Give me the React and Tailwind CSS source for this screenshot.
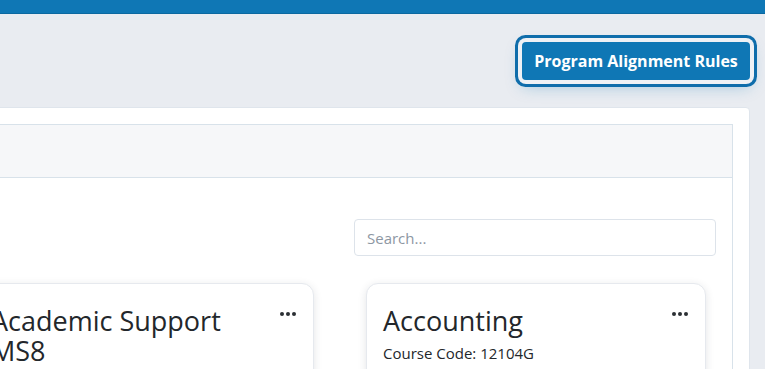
import { useState } from 'react';

const courses = [
  { id: 1, name: 'Academic Support MS8', code: 'AS108' },
  { id: 2, name: 'Accounting', code: '12104G' },
];

function CourseCard({ course }) {
  return (
    <div className="w-[340px] h-[120px] shrink-0 bg-white rounded-[12px] border border-[#e6e9ee] shadow-[0_2px_8px_rgba(30,41,59,0.12)] px-4 pt-[22px]">
      <div className="flex items-start justify-between">
        <h3 className="w-[250px] text-[27px] leading-[30px] text-[#23272b] font-normal">{course.name}</h3>
        <button className="mt-[6px] mr-[1px] flex gap-[2px] items-center">
          <span className="w-[4px] h-[4px] rounded-full bg-[#2b2f33]" />
          <span className="w-[4px] h-[4px] rounded-full bg-[#2b2f33]" />
          <span className="w-[4px] h-[4px] rounded-full bg-[#2b2f33]" />
        </button>
      </div>
      <p className="mt-[6px] text-[15px] text-[#23272b]">Course Code: {course.code}</p>
    </div>
  );
}

export default function App() {
  const [query, setQuery] = useState('');

  return (
    <div className="h-screen overflow-hidden bg-[#e9ecf1]" style={{ fontFamily: '"Open Sans", "Liberation Sans", sans-serif' }}>
      <div className="h-[14px] bg-[#0f77b5] border-b border-[#0b68a0]" />

      <div className="pr-[15px]">
        <div className="flex justify-end pt-[28px]">
          <button className="h-[38px] w-[228px] rounded-[4px] bg-[#0f77b5] text-white text-[16px] font-bold ring-[3px] ring-[#0f6dab] ring-offset-[4px] ring-offset-[#eef1f5] shadow-[0_6px_16px_rgba(15,119,181,0.35)]">
            Program Alignment Rules
          </button>
        </div>

        <div className="mt-[27px] ml-[-400px] bg-white rounded-[4px] border border-[#dfe5ec] p-4">
          <div className="border border-[#d8e2ea]">
            <div className="h-[53px] bg-[#f6f7f9] border-b border-[#d8e2ea]" />
            <div className="pt-[41px] pr-4 pb-8">
              <div className="flex justify-end">
                <input
                  value={query}
                  onChange={e => setQuery(e.target.value)}
                  placeholder="Search..."
                  className="w-[362px] h-[37px] rounded-[4px] border border-[#dde3ea] px-3 text-[15px] text-[#333] placeholder:text-[#8d97a3] outline-none"
                />
              </div>
              <div className="mt-[27px] mr-[10px] flex justify-end gap-[52px]">
                {courses.map(c => <CourseCard key={c.id} course={c} />)}
              </div>
            </div>
          </div>
        </div>
      </div>
    </div>
  );
}
